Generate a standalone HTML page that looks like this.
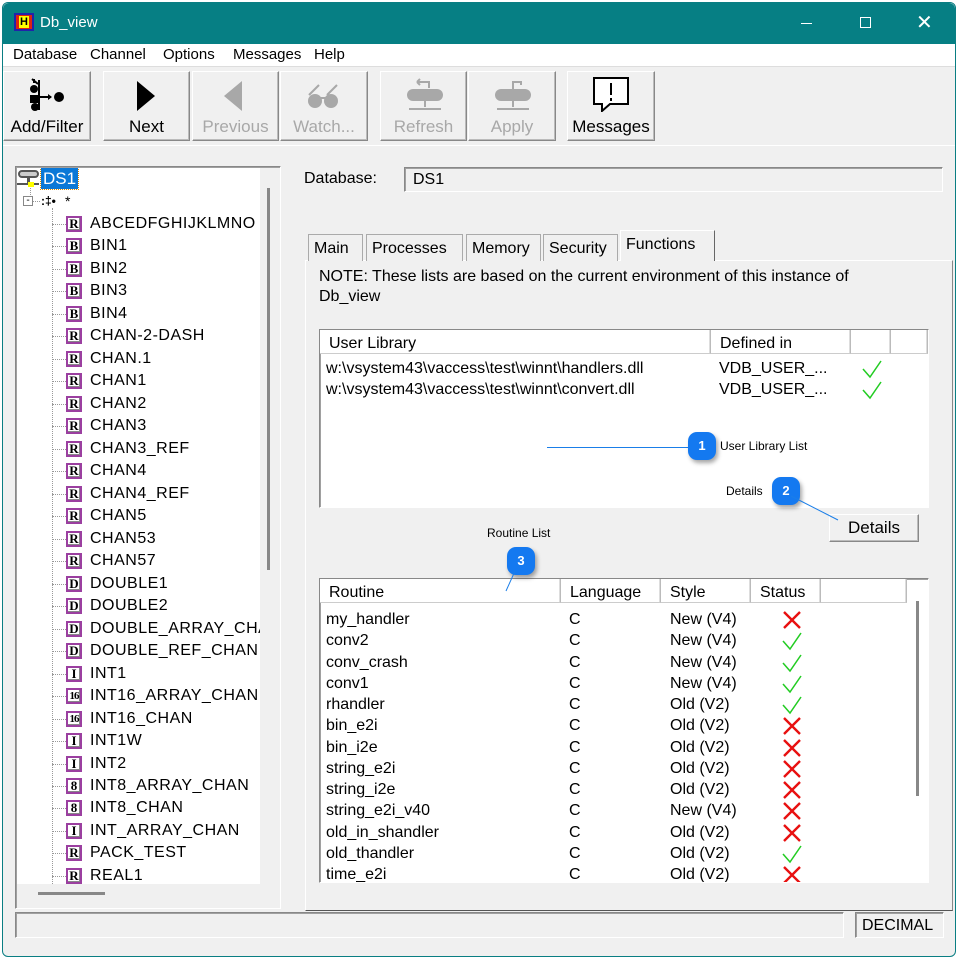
<!DOCTYPE html>
<html><head><meta charset="utf-8"><style>
*{margin:0;padding:0;box-sizing:border-box}
body{width:958px;height:960px;background:#fff;font-family:"Liberation Sans",Arial,sans-serif;position:relative;overflow:hidden;color:#000}
.a{position:absolute}
.win{left:2px;top:2px;width:954px;height:955px;border:1px solid #0a7e83;background:#f0f0f0;border-radius:6px;overflow:hidden}
.title{left:0;top:0;width:958px;height:44px;background:#067f84;color:#fff;font-size:15px}
.menu{left:3px;top:44px;width:952px;height:22px;background:#fff;font-size:15px}
.menu span{position:absolute;top:2px}
.btn{background:#f0f0f0;border:1px solid;border-color:#fff #888 #888 #fff;box-shadow:inset -1px -1px 0 #bbb}
.bl{position:absolute;left:0;right:0;bottom:3px;text-align:center;font-size:17px}
.dis{color:#a8a8a8}
.sunk{border:1px solid;border-color:#888 #fff #fff #888;box-shadow:inset 1px 1px 0 #a0a0a0}
.tree{left:17px;top:168px;width:243px;height:716px;background:#fff;overflow:hidden}
.row{position:absolute;left:0;height:22px;font-size:16px;white-space:nowrap}
.ic{position:absolute;left:49px;top:3px;width:16px;height:16px;border:2px solid #9b3fa0;font:bold 13px "Liberation Serif",serif;text-align:center;line-height:12px;background:#fff;box-shadow:inset -1px -1px 0 #888}
.tx{position:absolute;left:73px;top:2px}
.dot{position:absolute;left:35px;top:11px;width:14px;border-top:1px dotted #999}
.hd{position:absolute;top:0;height:24px;border-right:1px solid #bbb;border-bottom:1px solid #ccc;background:#fff;font-size:16px;padding:5px 0 0 9px;box-shadow:inset -1px 0 0 #ddd}
.rr{position:absolute;left:6px;height:21px;font-size:16px;white-space:nowrap;width:590px}
.rr span{position:absolute;top:0}
.tab{position:absolute;top:234px;height:27px;font-size:16px;border:1px solid #aaa;border-bottom:none;padding:5px 0 0 5px;background:#f0f0f0}
.bub{width:28px;height:28px;border-radius:9px;background:#1479f0;color:#fff;font-size:13px;font-weight:bold;text-align:center;line-height:28px;box-shadow:2px 3px 4px rgba(0,0,0,.35)}
</style></head><body>
<div class="a win"></div>
<div class="a title" style="left:3px;top:3px;width:952px;height:41px;border-radius:6px 6px 0 0">
 <div class="a" style="left:11px;top:10px;width:20px;height:18px;background:#d21;border:2px solid #22a"><div class="a" style="left:3px;top:1px;width:10px;height:12px;background:#ff0;color:#000;font:bold 11px sans-serif;text-align:center">H</div></div>
 <div class="a" style="left:37px;top:11px">Db_view</div>
 <div class="a" style="left:798px;top:20px;width:11px;border-top:1px solid #fff"></div>
 <div class="a" style="left:857px;top:14px;width:11px;height:11px;border:1px solid #fff"></div>
 <div class="a" style="left:913px;top:7px;font-size:20px">✕</div>
</div>
<div class="a menu"><span style="left:10px">Database</span><span style="left:87px">Channel</span><span style="left:160px">Options</span><span style="left:230px">Messages</span><span style="left:311px">Help</span></div>
<div class="a" style="left:3px;top:66px;width:952px;height:1px;background:#ddd"></div>

<div class="a btn" style="left:3px;top:71px;width:88px;height:70px">
 <svg class="a" style="left:24px;top:5px" width="42" height="36"><path d="M4 2l6 5M6 2v4M11 3v30" stroke="#000" stroke-width="2" fill="none"/><circle cx="6" cy="12" r="4"/><rect x="2" y="18" width="8" height="8"/><circle cx="7" cy="30" r="4"/><path d="M11 20h12" stroke="#000" stroke-width="2"/><path d="M20 17l4 3-4 3z"/><circle cx="31" cy="20" r="5"/></svg>
 <div class="bl">Add/Filter</div></div>
<div class="a btn" style="left:103px;top:71px;width:87px;height:70px">
 <svg class="a" style="left:30px;top:7px" width="26" height="36"><path d="M3 2L21 17 3 32z"/></svg><div class="bl">Next</div></div>
<div class="a btn" style="left:192px;top:71px;width:87px;height:70px">
 <svg class="a" style="left:28px;top:7px" width="26" height="36"><path d="M21 2L3 17 21 32z" fill="#a8a8a8"/></svg><div class="bl dis">Previous</div></div>
<div class="a btn" style="left:280px;top:71px;width:88px;height:70px">
 <svg class="a" style="left:24px;top:11px" width="40" height="30" fill="#a8a8a8"><circle cx="10" cy="18" r="7"/><circle cx="26" cy="18" r="7"/><path d="M15 15h6M4 12L14 2M22 12L32 2" stroke="#a8a8a8" stroke-width="2" fill="none"/></svg><div class="bl dis">Watch...</div></div>
<div class="a btn" style="left:380px;top:71px;width:87px;height:70px">
 <svg class="a" style="left:22px;top:6px" width="44" height="36" fill="#a8a8a8"><path d="M14 4h12v6M14 4l3-3M14 4l3 3" stroke="#a8a8a8" stroke-width="2" fill="none"/><rect x="4" y="11" width="36" height="12" rx="6"/><path d="M22 23v6M6 31h32" stroke="#a8a8a8" stroke-width="2"/></svg><div class="bl dis">Refresh</div></div>
<div class="a btn" style="left:468px;top:71px;width:88px;height:70px">
 <svg class="a" style="left:22px;top:6px" width="44" height="36" fill="#a8a8a8"><path d="M22 11V4h8v3" stroke="#a8a8a8" stroke-width="2" fill="none"/><rect x="4" y="11" width="36" height="12" rx="6"/><path d="M22 23v6M6 31h32" stroke="#a8a8a8" stroke-width="2"/></svg><div class="bl dis">Apply</div></div>
<div class="a btn" style="left:567px;top:71px;width:88px;height:70px">
 <svg class="a" style="left:24px;top:4px" width="40" height="36"><path d="M2 2h34v26H18l-8 7v-7H2z" fill="#fff" stroke="#000" stroke-width="2"/><path d="M19 7v12M19 22v3" stroke="#000" stroke-width="2"/></svg><div class="bl">Messages</div></div>
<div class="a" style="left:3px;top:145px;width:952px;height:1px;background:#fff"></div>

<div class="a sunk" style="left:15px;top:166px;width:266px;height:743px"></div>
<div class="a tree">
 <div class="a" style="left:1px;top:2px;width:21px;height:8px;border:2px solid #555;border-radius:4px;background:#ccc"></div>
 <div class="a" style="left:10px;top:10px;width:3px;height:5px;background:#555"></div>
 <div class="a" style="left:0;top:15px;width:22px;height:2px;background:#555"></div>
 <div class="a" style="left:11px;top:14px;width:6px;height:5px;background:#ff0"></div>
 <div class="a" style="left:24px;top:0;width:37px;height:21px;background:#0b78d7;color:#fff;font-size:17px;padding:1px 2px;outline:1px dotted #d80">DS1</div>
 <div class="a" style="left:13px;top:20px;height:9px;border-left:1px dotted #999"></div>
 <div class="a" style="left:6px;top:28px;width:10px;height:10px;border:1px solid #888;font-size:10px;line-height:7px;text-align:center">-</div>
 <div class="a" style="left:16px;top:33px;width:7px;border-top:1px dotted #999"></div>
 <div class="a" style="left:24px;top:26px;font:bold 12px sans-serif">:‡•</div>
 <div class="a" style="left:48px;top:25px;font-size:14px">*</div>
 <div class="a" style="left:35px;top:40px;height:680px;border-left:1px dotted #999"></div>
 <div id="t"></div>
</div>
<div class="a" style="left:267px;top:188px;width:3px;height:382px;background:#888"></div>
<div class="a" style="left:38px;top:892px;width:67px;height:3px;background:#888"></div>

<div class="a" style="left:304px;top:170px;font-size:16px">Database:</div>
<div class="a sunk" style="left:404px;top:167px;width:539px;height:25px;font-size:16px;padding:3px 8px">DS1</div>

<div class="a" style="left:305px;top:260px;width:648px;height:651px;border:1px solid;border-color:#fff #888 #555 #fff"></div>
<div class="tab" style="left:308px;width:55px">Main</div>
<div class="tab" style="left:366px;width:97px">Processes</div>
<div class="tab" style="left:466px;width:75px">Memory</div>
<div class="tab" style="left:543px;width:75px">Security</div>
<div class="tab" style="left:620px;top:230px;height:31px;width:95px;border-color:#fff #666 #666 #fff;padding-top:5px">Functions</div>

<div class="a" style="left:319px;top:267px;font-size:16px;line-height:20px;width:585px">NOTE: These lists are based on the current environment of this instance of<br>Db_view</div>

<div class="a sunk" style="left:319px;top:329px;width:610px;height:179px;background:#fff;overflow:hidden">
 <div class="hd" style="left:0;width:391px">User Library</div>
 <div class="hd" style="left:391px;width:140px">Defined in</div>
 <div class="hd" style="left:531px;width:40px"></div>
 <div class="hd" style="left:571px;width:37px"></div>
 <div class="rr" style="top:30px"><span>w:\vsystem43\vaccess\test\winnt\handlers.dll</span><span style="left:393px">VDB_USER_...</span><svg class="a" style="left:535px;top:-1px" width="22" height="20"><path d="M2 10l7 8L20 2" stroke="#22cc22" stroke-width="1.5" fill="none"/></svg></div>
 <div class="rr" style="top:51px"><span>w:\vsystem43\vaccess\test\winnt\convert.dll</span><span style="left:393px">VDB_USER_...</span><svg class="a" style="left:535px;top:-1px" width="22" height="20"><path d="M2 10l7 8L20 2" stroke="#22cc22" stroke-width="1.5" fill="none"/></svg></div>
</div>

<div class="a btn" style="left:829px;top:514px;width:90px;height:28px;font-size:17px;text-align:center;padding-top:3px">Details</div>

<div class="a sunk" style="left:319px;top:578px;width:610px;height:305px;background:#fff;overflow:hidden">
 <div class="hd" style="left:0;width:241px">Routine</div>
 <div class="hd" style="left:241px;width:100px">Language</div>
 <div class="hd" style="left:341px;width:90px">Style</div>
 <div class="hd" style="left:431px;width:70px">Status</div>
 <div class="hd" style="left:501px;width:86px"></div>
 <div class="a" style="left:596px;top:22px;width:3px;height:195px;background:#888"></div>
 <div id="r"></div>
</div>

<div class="a" style="left:547px;top:447px;width:143px;height:1px;background:#1a7ee8"></div>
<div class="a bub" style="left:688px;top:432px">1</div>
<div class="a" style="left:720px;top:439px;font-size:12px">User Library List</div>
<div class="a" style="left:726px;top:484px;font-size:12px">Details</div>
<div class="a bub" style="left:772px;top:477px">2</div>
<svg class="a" style="left:790px;top:495px" width="60" height="30"><path d="M1 1L48 25" stroke="#1a7ee8"/></svg>
<div class="a" style="left:487px;top:526px;font-size:12px">Routine List</div>
<div class="a bub" style="left:507px;top:547px">3</div>
<svg class="a" style="left:500px;top:570px" width="20" height="25"><path d="M15 1L6 21" stroke="#1a7ee8"/></svg>

<div class="a sunk" style="left:15px;top:912px;width:829px;height:26px"></div>
<div class="a sunk" style="left:855px;top:912px;width:89px;height:26px;font-size:16px;padding:4px 6px">DECIMAL</div>

<script>
var it=[["R","ABCEDFGHIJKLMNO"],["B","BIN1"],["B","BIN2"],["B","BIN3"],["B","BIN4"],["R","CHAN-2-DASH"],["R","CHAN.1"],["R","CHAN1"],["R","CHAN2"],["R","CHAN3"],["R","CHAN3_REF"],["R","CHAN4"],["R","CHAN4_REF"],["R","CHAN5"],["R","CHAN53"],["R","CHAN57"],["D","DOUBLE1"],["D","DOUBLE2"],["D","DOUBLE_ARRAY_CHAN"],["D","DOUBLE_REF_CHAN"],["I","INT1"],["16","INT16_ARRAY_CHAN"],["16","INT16_CHAN"],["I","INT1W"],["I","INT2"],["8","INT8_ARRAY_CHAN"],["8","INT8_CHAN"],["I","INT_ARRAY_CHAN"],["R","PACK_TEST"],["R","REAL1"]];
var h="";for(var i=0;i<it.length;i++){var y=45+i*22.48;h+='<div class="row" style="top:'+y+'px;width:243px"><div class="dot"></div><div class="ic"'+(it[i][0]=="16"?' style="font-size:11px;letter-spacing:-1px"':'')+'>'+it[i][0]+'</div><div class="tx" style="letter-spacing:0.5px">'+it[i][1]+'</div></div>';}
document.getElementById("t").innerHTML=h;
var OK='<svg class="a" style="left:455px;top:-1px" width="22" height="20"><path d="M2 10l7 8L20 2" stroke="#22cc22" stroke-width="1.5" fill="none"/></svg>';
var NO='<svg class="a" style="left:456px;top:-1px" width="20" height="20"><path d="M2 2L18 18M18 2L2 18" stroke="#e81010" stroke-width="2.4"/></svg>';
var rs=[["my_handler","New (V4)",0],["conv2","New (V4)",1],["conv_crash","New (V4)",1],["conv1","New (V4)",1],["rhandler","Old (V2)",1],["bin_e2i","Old (V2)",0],["bin_i2e","Old (V2)",0],["string_e2i","Old (V2)",0],["string_i2e","Old (V2)",0],["string_e2i_v40","New (V4)",0],["old_in_shandler","Old (V2)",0],["old_thandler","Old (V2)",1],["time_e2i","Old (V2)",0]];
h="";for(i=0;i<rs.length;i++){var y=32+i*21.25;h+='<div class="rr" style="top:'+y+'px"><span>'+rs[i][0]+'</span><span style="left:243px">C</span><span style="left:344px">'+rs[i][1]+'</span>'+(rs[i][2]?OK:NO)+'</div>';}
document.getElementById("r").innerHTML=h;
</script>
</body></html>
